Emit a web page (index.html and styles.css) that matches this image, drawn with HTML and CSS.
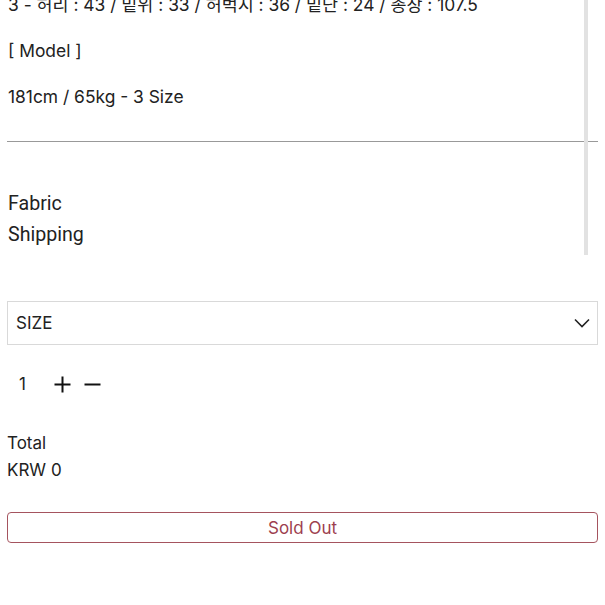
FILE: index.html
```html
<!DOCTYPE html>
<html lang="ko">
<head>
    <meta charset="UTF-8">
    <meta name="viewport" content="width=device-width, initial-scale=1.0">
    <title>Product</title>
    <link rel="stylesheet" href="styles.css">
</head>
<body>
<div class="detail-wrap">
    <div class="detail">
        <p>3 - 허리 : 43 / 밑위 : 33 / 허벅지 : 36 / 밑단 : 24 / 총장 : 107.5</p>
        <p>[ Model ]</p>
        <p>181cm / 65kg - 3 Size</p>
        <div class="divider"></div>
        <ul class="info-links">
            <li>Fabric</li>
            <li>Shipping</li>
        </ul>
    </div>
    <div class="scroll-thumb"></div>
</div>

<div class="size-select">
    <span>SIZE</span>
    <svg width="16" height="10" viewBox="0 0 16 10"><path d="M1 1.5 L8 8.5 L15 1.5" fill="none" stroke="#222" stroke-width="1.6"/></svg>
</div>

<div class="qty">
    <span class="qty-num">1</span>
    <svg width="17" height="17" viewBox="0 0 17 17"><path d="M8.5 0.5 V16.5 M0.5 8.5 H16.5" stroke="#111" stroke-width="2"/></svg>
    <svg width="17" height="17" viewBox="0 0 17 17"><path d="M0.5 8.5 H16.5" stroke="#111" stroke-width="2"/></svg>
</div>

<div class="total">
    <div>Total</div>
    <div>KRW 0</div>
</div>

<button class="sold-out">Sold Out</button>
</body>
</html>
```

FILE: styles.css
```css
body {
    font-family: Inter, "Noto Sans CJK KR", sans-serif;
    font-size: 17px;
    color: #222;
    margin: 0;
    padding: 0 7px;
    background: #fff;
    overflow: hidden;
}
.detail-wrap {
    position: relative;
    display: flow-root;
    height: 262px;
}
.detail {
    margin-top: -7px;
}
.detail p {
    margin: 0 0 23px 1px;
    line-height: 23px;
    font-size: 17.4px;
}
.divider {
    height: 1px;
    background: #999;
    margin-top: 33px;
}
.info-links {
    list-style: none;
    margin: 46px 0 0 1px;
    padding: 0;
    font-family: Roboto, sans-serif;
    font-size: 19.6px;
}
.info-links li {
    line-height: 31px;
}
.scroll-thumb {
    position: absolute;
    top: 0;
    right: 10px;
    width: 4px;
    height: 255px;
    background: #e2e2e2;
}
.size-select {
    margin-top: 39px;
    height: 42px;
    border: 1px solid #d9d9d9;
    display: flex;
    align-items: center;
    justify-content: space-between;
    padding: 0 7px 0 8px;
}
.qty {
    display: flex;
    align-items: center;
    gap: 13px;
    height: 30px;
    margin-top: 24px;
    padding-left: 12px;
}
.qty-num {
    width: 22px;
}
.total {
    margin-top: 31px;
    line-height: 27px;
}
.sold-out {
    display: block;
    width: 100%;
    margin-top: 28px;
    height: 31px;
    border: 1px solid #a5545e;
    border-radius: 4px;
    background: #fff;
    color: #9d3f4f;
    font-family: Inter, sans-serif;
    font-size: 17px;
}
```
